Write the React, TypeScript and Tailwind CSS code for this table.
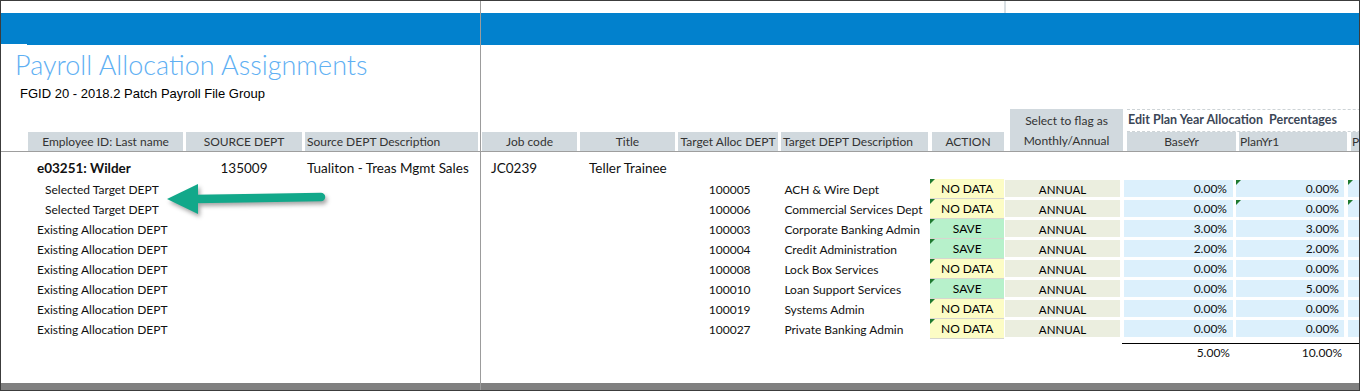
import React from 'react';

type Row = {
  label: string;
  selected: boolean;
  dept: string;
  desc: string;
  action: 'NO DATA' | 'SAVE';
  base: string;
  plan: string;
};

const rows: Row[] = [
  { label: 'Selected Target DEPT', selected: true, dept: '100005', desc: 'ACH & Wire Dept', action: 'NO DATA', base: '0.00%', plan: '0.00%' },
  { label: 'Selected Target DEPT', selected: true, dept: '100006', desc: 'Commercial Services Dept', action: 'NO DATA', base: '0.00%', plan: '0.00%' },
  { label: 'Existing Allocation DEPT', selected: false, dept: '100003', desc: 'Corporate Banking Admin', action: 'SAVE', base: '3.00%', plan: '3.00%' },
  { label: 'Existing Allocation DEPT', selected: false, dept: '100004', desc: 'Credit Administration', action: 'SAVE', base: '2.00%', plan: '2.00%' },
  { label: 'Existing Allocation DEPT', selected: false, dept: '100008', desc: 'Lock Box Services', action: 'NO DATA', base: '0.00%', plan: '0.00%' },
  { label: 'Existing Allocation DEPT', selected: false, dept: '100010', desc: 'Loan Support Services', action: 'SAVE', base: '0.00%', plan: '5.00%' },
  { label: 'Existing Allocation DEPT', selected: false, dept: '100019', desc: 'Systems Admin', action: 'NO DATA', base: '0.00%', plan: '0.00%' },
  { label: 'Existing Allocation DEPT', selected: false, dept: '100027', desc: 'Private Banking Admin', action: 'NO DATA', base: '0.00%', plan: '0.00%' },
];

const hdr = 'flex h-[19px] items-center bg-[#d1d9de] text-[12px] text-[#333]';

// little green comment marker in the top-left corner of a cell
const Flag = () => (
  <span className="absolute left-0 top-0 h-0 w-0 border-r-[5px] border-t-[5px] border-r-transparent border-t-[#1f7a30]" />
);

const Arrow = () => (
  <svg
    className="absolute left-[159px] top-[177px] drop-shadow-[2px_3px_2px_rgba(0,0,0,0.35)]"
    width="172"
    height="42"
    viewBox="0 0 172 42"
  >
    <line x1="34" y1="21" x2="161" y2="19" stroke="#12a88a" strokeWidth="8.5" strokeLinecap="round" />
    <polygon points="7,21 38,6 38,36" fill="#12a88a" />
  </svg>
);

const LeftPane = () => (
  <div className="relative flex w-[479px] shrink-0 flex-col">
    <div className="h-[12px]" />
    <div className="h-[31px] bg-[#0281cd]" />
    <div className="flex h-[1px]">
      <div className="w-[26px]" />
      <div className="flex-1 bg-[#0281cd]" />
    </div>
    <div className="h-[87px]">
      <div className="ml-[14px] mt-[4px] text-[27px] leading-[32px] font-light text-[#5fb0f3]">
        Payroll Allocation Assignments
      </div>
      <div className="ml-[19px] mt-[5px] text-[13px] leading-[16px] text-black [font-family:'Liberation_Sans',Arial,sans-serif]">
        FGID 20 - 2018.2 Patch Payroll File Group
      </div>
    </div>
    <div className="flex h-[19px] pl-[27px]">
      <div className={`${hdr} w-[155px] justify-center`}>Employee ID: Last name</div>
      <div className={`${hdr} ml-[3px] w-[116px] justify-center`}>SOURCE DEPT</div>
      <div className={`${hdr} ml-[3px] w-[173px] pl-[2px]`}>Source DEPT Description</div>
    </div>
    <div className="h-[1px] bg-[#9e9e9e]" />
    <div className="flex h-[27px] items-center pl-[27px] pt-[5px] text-[13.5px] text-[#111]">
      <div className="w-[155px] pl-[9px] font-bold">e03251: Wilder</div>
      <div className="ml-[3px] w-[116px] text-center">135009</div>
      <div className="ml-[3px] w-[173px] pl-[2px]">Tualiton - Treas Mgmt Sales</div>
    </div>
    {rows.map((r, i) => (
      <div key={i} className="flex h-[20px] items-center pl-[27px] pt-[2px] text-[12px] text-[#111]">
        <div className={r.selected ? 'pl-[17px]' : 'pl-[9px]'}>{r.label}</div>
      </div>
    ))}
    <div className="flex-1" />
    <div className="h-[7px] bg-[#808080]" />
    <Arrow />
  </div>
);

const RightPane = () => (
  <div className="flex min-w-0 flex-1 flex-col overflow-hidden border-l border-[#9c9c9c]">
    <div className="flex h-[12px]">
      <div className="w-[523px] shrink-0" />
      <div className="w-[2px] bg-[#d8dfe3]" />
    </div>
    <div className="h-[32px] bg-[#0281cd]" />
    <div className="h-[64px]" />
    {/* header block */}
    <div className="flex h-[42px]">
      <div className="flex w-[523px] shrink-0 flex-col">
        <div className="h-[23px]" />
        <div className="flex">
          <div className={`${hdr} ml-[1px] w-[95px] justify-center`}>Job code</div>
          <div className={`${hdr} ml-[3px] w-[95px] justify-center`}>Title</div>
          <div className={`${hdr} ml-[3px] w-[100px] justify-center`}>Target Alloc DEPT</div>
          <div className={`${hdr} ml-[3px] w-[147px] pl-[2px]`}>Target DEPT Description</div>
          <div className={`${hdr} ml-[4px] w-[72px] justify-center`}>ACTION</div>
        </div>
      </div>
      <div className="ml-[6px] flex w-[113px] shrink-0 flex-col items-center bg-[#d1d9de] text-[12px] leading-[20px] text-[#333]">
        <div className="mt-[2px]">Select to flag as</div>
        <div>Monthly/Annual</div>
      </div>
      <div className="ml-[4px] flex flex-1 flex-col">
        <div className="flex h-[23px] items-center whitespace-pre border-y border-dashed border-[#cdd3d6] pl-[1px] text-[12.5px] font-bold text-[#3b4656]">
          Edit Plan Year Allocation  Percentages
        </div>
        <div className="flex">
          <div className={`${hdr} w-[109px] shrink-0 justify-center`}>BaseYr</div>
          <div className={`${hdr} ml-[3px] w-[108px] shrink-0 pl-[1px]`}>PlanYr1</div>
          <div className={`${hdr} ml-[4px] w-[100px] shrink-0 pl-[1px]`}>P</div>
        </div>
      </div>
    </div>
    <div className="h-[1px] bg-[#9e9e9e]" />
    {/* body */}
    <div className="flex flex-1">
      <div className="flex w-[523px] shrink-0 flex-col">
        <div className="flex h-[27px] items-center pt-[5px] text-[13.5px] text-[#111]">
          <div className="ml-[1px] w-[95px] pl-[9px]">JC0239</div>
          <div className="ml-[3px] w-[95px] pl-[9px]">Teller Trainee</div>
        </div>
        {rows.map((r, i) => (
          <div key={i} className="flex h-[20px] text-[12px] text-[#111]">
            <div className="ml-[199px] flex w-[100px] items-center justify-center pt-[2px]">{r.dept}</div>
            <div className="ml-[3px] flex w-[147px] items-center whitespace-nowrap pl-[2px] pt-[2px]">{r.desc}</div>
            <div
              className={`relative ml-[2px] flex w-[74px] items-center justify-center border-b border-[#d6d6cf] pt-[1px] text-[12px] text-black ${
                r.action === 'SAVE' ? 'bg-[#b7f1cb]' : 'bg-[#fcfcc5]'
              }`}
            >
              <Flag />
              {r.action}
            </div>
          </div>
        ))}
      </div>
      <div className="w-[3px] bg-[#d8dfe3]" />
      <div className="flex flex-1 flex-col">
        <div className="h-[27px]" />
        {rows.map((r, i) => (
          <div key={i} className="flex h-[20px] pt-[1px] pb-[2px] text-[12px] text-[#111]">
            <div className="ml-[1px] flex w-[115px] shrink-0 items-center justify-center bg-[#ebeedf] pt-[3px] text-[11.5px] text-black">
              ANNUAL
            </div>
            <div className="ml-[4px] flex w-[109px] shrink-0 items-center justify-end bg-[#dcf0fc] pr-[6px] pt-[1px]">{r.base}</div>
            <div className="relative ml-[3px] flex w-[108px] shrink-0 items-center justify-end bg-[#dcf0fc] pr-[5px] pt-[1px]">
              {r.selected && <Flag />}
              {r.plan}
            </div>
            <div className="relative ml-[4px] w-[100px] shrink-0 bg-[#dcf0fc]">{r.selected && <Flag />}</div>
          </div>
        ))}
        <div className="ml-[118px] mt-[4px] flex h-[18px] items-center border-t border-black text-[12px] text-[#111]">
          <div className="w-[111px] shrink-0 pr-[3px] text-right">5.00%</div>
          <div className="ml-[3px] w-[108px] shrink-0 pr-[2px] text-right">10.00%</div>
        </div>
      </div>
    </div>
    <div className="h-[7px] bg-[#808080]" />
  </div>
);

export default function App() {
  return (
    <div className="flex h-[391px] w-[1360px] overflow-hidden border border-[#3c3c3c] bg-white [font-family:Lato,'Open_Sans',sans-serif]">
      <LeftPane />
      <RightPane />
    </div>
  );
}
